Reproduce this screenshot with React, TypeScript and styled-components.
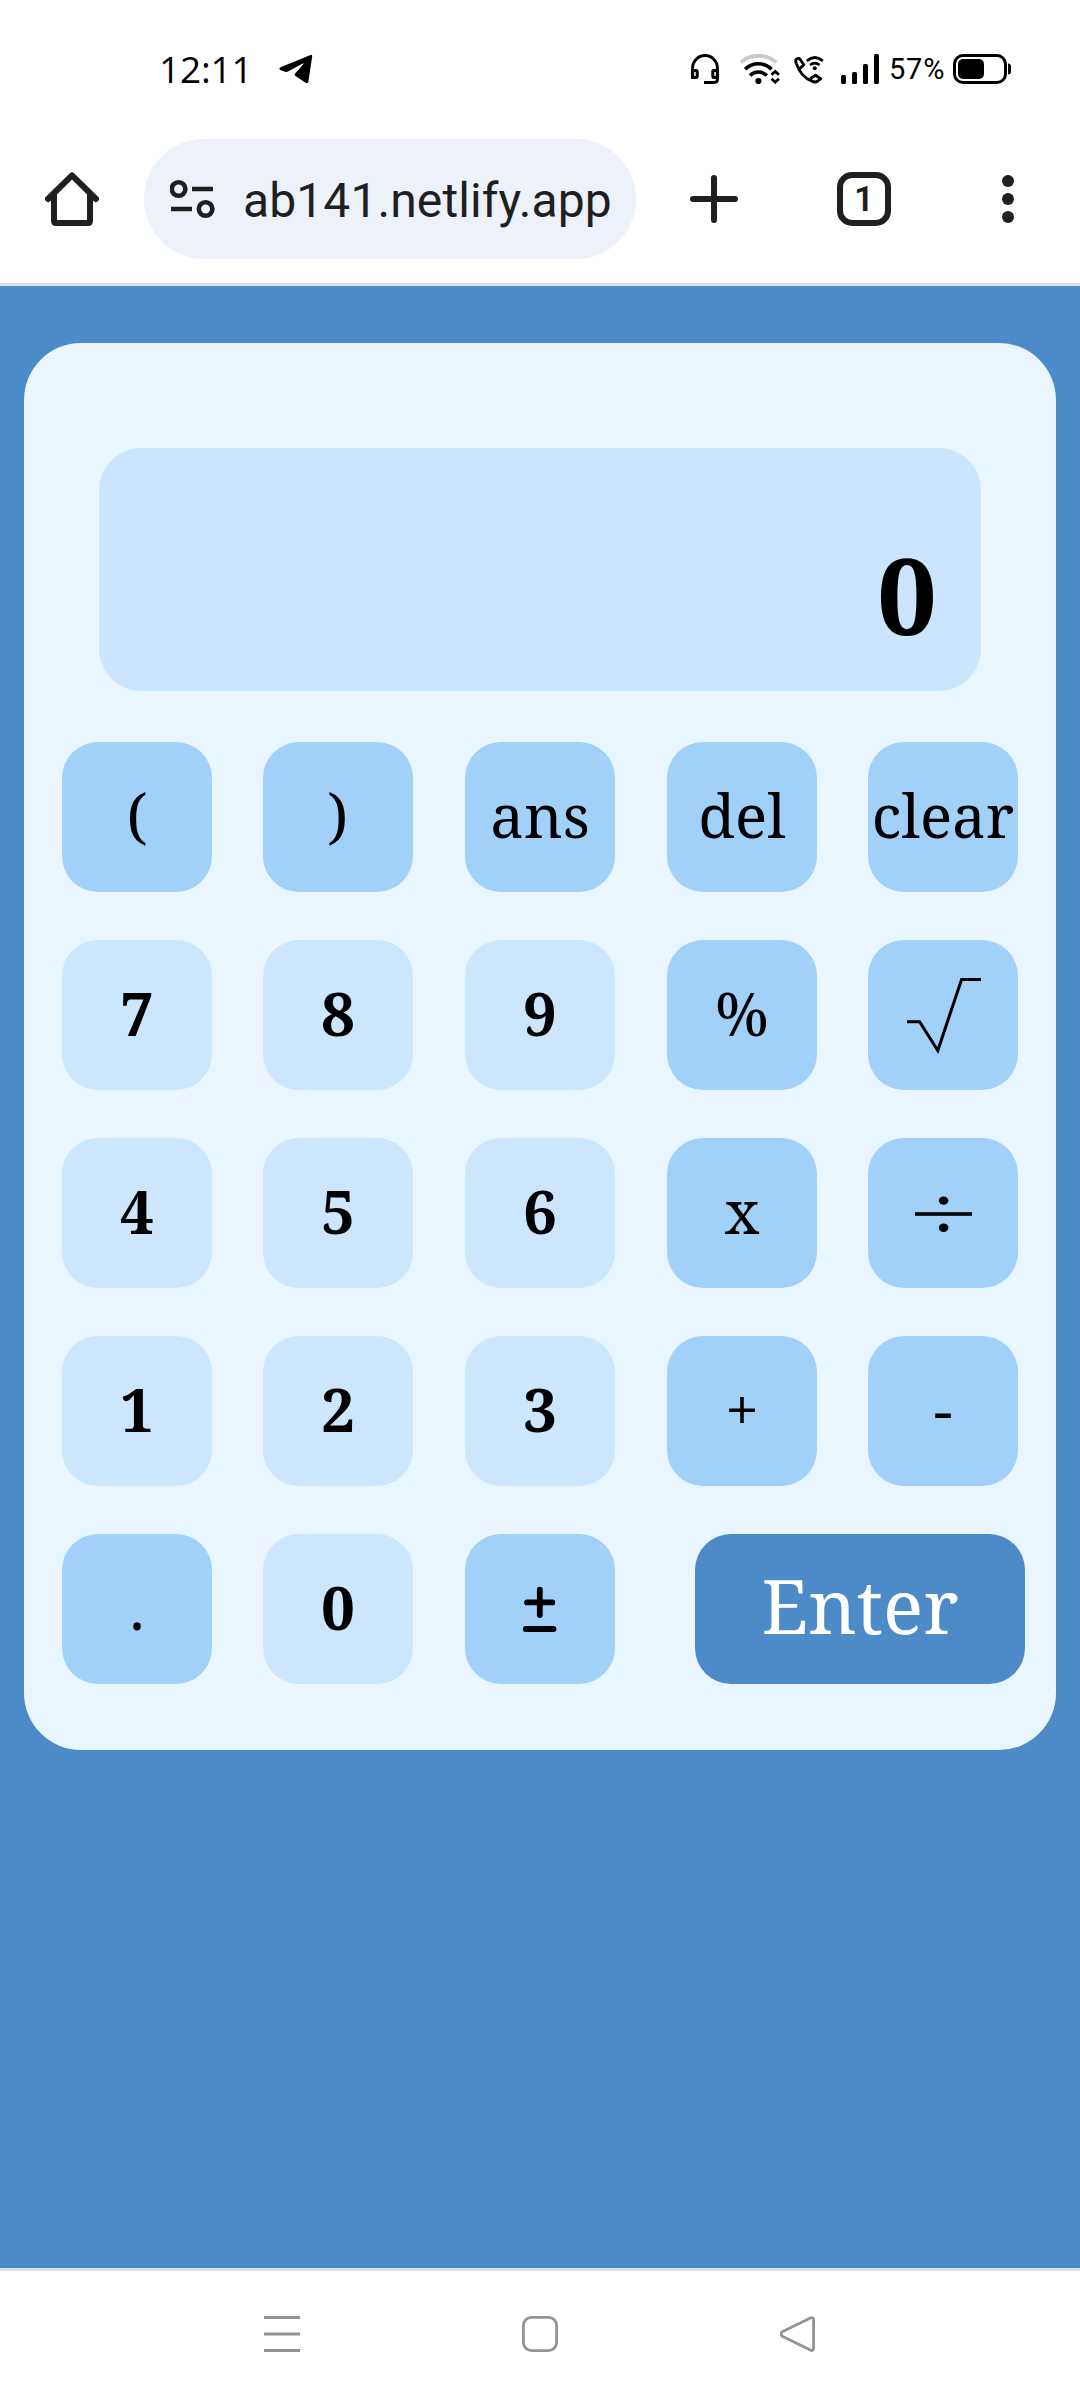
import React from "react";
import styled, { createGlobalStyle } from "styled-components";

const GlobalStyle = createGlobalStyle`
  *, *::before, *::after { box-sizing: border-box; }
  body { margin: 0; background: #fff; }
  svg { display: block; flex: none; }
`;

const serif = `"Noto Serif", "DejaVu Serif Condensed", "DejaVu Serif", serif`;

const Screen = styled.div`
  width: 1080px;
  height: 2400px;
  display: flex;
  flex-direction: column;
  overflow: hidden;
  background: #fff;
`;

const StatusBar = styled.header`
  height: 139px;
  padding: 44px 69px 0 159px;
  display: flex;
  justify-content: space-between;
  align-items: flex-start;
  color: #000;
`;

const StatusGroup = styled.div`
  height: 50px;
  display: flex;
  align-items: center;
`;

const Clock = styled.span`
  font: 400 37px/50px "Open Sans", "Noto Sans", sans-serif;
  letter-spacing: -0.2px;
  width: 120px;
  white-space: nowrap;
`;

const Percent = styled.span`
  font: 400 29px/50px Roboto, sans-serif;
  letter-spacing: 0.8px;
  width: 74px;
  padding-left: 10px;
  white-space: nowrap;
`;

const Gap = styled.span<{ $w: number }>`
  width: ${(p) => p.$w}px;
  flex: none;
`;

const Toolbar = styled.nav`
  height: 147px;
  display: flex;
  align-items: flex-start;
  border-bottom: 3px solid #dde3e3;
`;

const ToolButton = styled.button<{ $width: number }>`
  width: ${(p) => p.$width}px;
  height: 120px;
  padding: 0;
  border: 0;
  background: none;
  display: flex;
  align-items: center;
  justify-content: center;
  color: #1f1f1f;
`;

const AddressBar = styled.div`
  width: 492px;
  height: 120px;
  padding-left: 26px;
  border-radius: 60px;
  background: #ecf1fa;
  display: flex;
  align-items: center;
  gap: 27px;
  color: #1f1f1f;
`;

const Address = styled.span`
  padding-top: 3px;
  font: 400 48px/60px Roboto, sans-serif;
  letter-spacing: 0.1px;
  white-space: nowrap;
`;

const TabCount = styled.span`
  width: 54px;
  height: 54px;
  padding-top: 2px;
  border: 6px solid #1f1f1f;
  border-radius: 15px;
  display: flex;
  align-items: center;
  justify-content: center;
  font: 600 35px/40px Roboto, sans-serif;
`;

const Page = styled.main`
  height: 1982px;
  padding: 57px 24px 0;
  background: #4c8ac8;
`;

const Calculator = styled.section`
  height: 1407px;
  padding: 105px 38px 0;
  border-radius: 57px;
  background: #e9f5ff;
`;

const Display = styled.div`
  height: 243px;
  margin: 0 37px 51px;
  padding: 0 44px 35px 0;
  border-radius: 42px;
  background: #cbe5ff;
  display: flex;
  justify-content: flex-end;
  align-items: flex-end;
  font: 700 106px/124px ${serif};
  color: #000;
`;

const Keypad = styled.div`
  display: grid;
  grid-template-columns: 201px 202px 202px 201px 150px;
  grid-auto-rows: 150px;
  row-gap: 48px;
`;

type Kind = "digit" | "operator";

const Key = styled.button<{ $kind: Kind }>`
  width: 150px;
  padding: 0;
  border: 0;
  border-radius: 36px;
  background: ${(p) => (p.$kind === "digit" ? "#cce6fe" : "#a1d0f8")};
  color: #000;
  display: flex;
  align-items: center;
  justify-content: center;
  font: ${(p) => (p.$kind === "digit" ? 700 : 400)} 60px/80px ${serif};
  white-space: nowrap;
`;

const EnterKey = styled(Key)`
  grid-column: span 2;
  justify-self: end;
  width: 330px;
  margin-right: -7px;
  padding-bottom: 4px;
  background: #4c8ac8;
  color: #fff;
  font-size: 75px;
`;

const Label = styled.span`
  display: block;
  padding-bottom: 5px;
`;

const NavBar = styled.footer`
  height: 132px;
  padding: 0 264px 3px;
  border-top: 3px solid #dde3e8;
  display: flex;
  justify-content: space-between;
  align-items: center;
  color: #939393;
`;

const Telegram = () => (
  <svg width="34" height="32" viewBox="0 0 34 32" fill="currentColor">
    <path d="M1.5 14.2 31.5 2Q33.2 1.4 33.2 3.2L29.4 28.6Q28.8 31 26.6 29.7L16.5 23Q15 21.8 16.3 20.3L24.5 11Q24.8 10.2 23.8 10.4L9 18.6Q7.6 19.3 6 18.8L1.2 17Q-.5 15.4 1.5 14.2Z" />
  </svg>
);

const Headset = () => (
  <svg width="28" height="30" viewBox="0 0 28 30" fill="none" stroke="currentColor" strokeWidth="3">
    <path d="M1.6 23.5V14A12.4 12.4 0 0 1 26.4 14V25.5Q26.4 28.4 23.5 28.4H13" />
    <path d="M1.6 16.6H5Q6.2 16.6 6.2 17.8V22Q6.2 23.4 5 23.4H1.6ZM26.4 16.6H23Q21.8 16.6 21.8 17.8V22Q21.8 23.4 23 23.4H26.4Z" />
  </svg>
);

const Wifi = () => (
  <svg width="40" height="30" viewBox="0 0 40 30" fill="none" stroke="currentColor" strokeWidth="3.6">
    <path d="M1 8.4Q8 1.8 18.2 1.8T36.2 8.4" stroke="#cacaca" strokeWidth="3.8" />
    <path d="M5.2 15.2Q10.8 9.8 18.4 9.8T31.6 15.2" />
    <path d="M10 21.6Q13.6 18 18.4 18T26.8 21.6" />
    <circle cx="18.4" cy="27" r="3.1" fill="currentColor" stroke="none" />
    <path d="M31.5 20.8 35.2 17.4 38.9 20.8M31.5 24.8 35.2 28.2 38.9 24.8" strokeWidth="2.8" />
  </svg>
);

const WifiCall = () => (
  <svg width="30" height="30" viewBox="0 0 30 30" fill="none" stroke="currentColor" strokeWidth="2.9" strokeLinejoin="round">
    <path d="M2.4 9.6Q.6 5.4 3.4 4.6Q5 4 6 5.2L9.8 10.8L5 15.2" />
    <path d="M2.4 9.6Q6.6 22.6 18.4 27.4Q22.4 29.4 26.6 24.8L21.6 21.2L16.4 24.4" />
    <path d="M12.8 6.8Q20.8.4 28.8 6.8" />
    <path d="M16 11Q20.8 7.4 25.6 11" strokeWidth="2.6" />
    <circle cx="20.8" cy="14.3" r="2" fill="currentColor" stroke="none" />
  </svg>
);

const Signal = () => (
  <svg width="38" height="30" viewBox="0 0 38 30" fill="currentColor">
    <rect x="0" y="21" width="5" height="9" rx="1.6" />
    <rect x="11" y="18" width="5" height="12" rx="1.6" />
    <rect x="22" y="10" width="5" height="20" rx="1.6" />
    <rect x="33" y="0" width="5" height="30" rx="1.6" />
  </svg>
);

const Battery = () => (
  <svg width="58" height="30" viewBox="0 0 58 30" fill="currentColor">
    <rect x="1.5" y="1.5" width="51" height="27" rx="8.5" fill="none" stroke="currentColor" strokeWidth="3" />
    <rect x="5" y="5" width="26" height="20" rx="5" />
    <path d="M55 9.5Q58 10 58 12V18Q58 20 55 20.5Z" />
  </svg>
);

const Home = () => (
  <svg width="60" height="60" viewBox="0 0 60 60" fill="none" stroke="currentColor" strokeWidth="6" strokeLinecap="round" strokeLinejoin="round">
    <path d="M6 30 30 6.4 54 30" />
    <path d="M12 25V52Q12 54 14 54H46Q48 54 48 52V25" />
  </svg>
);

const SiteSettings = () => (
  <svg width="46" height="40" viewBox="0 0 46 40" fill="none" stroke="currentColor" strokeWidth="4.6">
    <circle cx="8.6" cy="10" r="6.8" />
    <path d="M22 10H43M1 30H22" />
    <circle cx="35.6" cy="30" r="6.8" />
  </svg>
);

const Plus = () => (
  <svg width="48" height="48" viewBox="0 0 48 48" fill="none" stroke="currentColor" strokeWidth="6" strokeLinecap="round">
    <path d="M24 3V45M3 24H45" />
  </svg>
);

const More = () => (
  <svg width="12" height="48" viewBox="0 0 12 48" fill="currentColor">
    <circle cx="6" cy="6" r="6" />
    <circle cx="6" cy="24" r="6" />
    <circle cx="6" cy="42" r="6" />
  </svg>
);

const Root = () => (
  <svg width="150" height="150" viewBox="0 0 150 150" fill="none" stroke="currentColor" strokeWidth="3">
    <path d="M39 81.8H51.6L69.8 110.5 93.6 39.4H113" />
  </svg>
);

const Divide = () => (
  <svg width="150" height="150" viewBox="0 0 150 150" fill="currentColor">
    <rect x="47" y="74.2" width="57" height="3.6" />
    <ellipse cx="75.6" cy="62.6" rx="4.8" ry="4.2" />
    <ellipse cx="75.6" cy="89.7" rx="4.8" ry="4.2" />
  </svg>
);

const PlusMinus = () => (
  <svg width="150" height="150" viewBox="0 0 150 150" fill="none" stroke="currentColor" strokeWidth="5.8" strokeLinecap="round">
    <path d="M62 68.4H87.3M74.8 55.6V81M60.8 95H88.5" />
  </svg>
);

const Recents = () => (
  <svg width="36" height="36" viewBox="0 0 36 36" fill="none" stroke="currentColor" strokeWidth="3">
    <path d="M0 1.6H36M0 18H36M0 34.4H36" />
  </svg>
);

const HomeSquare = () => (
  <svg width="36" height="36" viewBox="0 0 36 36" fill="none" stroke="currentColor" strokeWidth="2.8">
    <rect x="1.4" y="1.4" width="33.2" height="33.2" rx="8" />
  </svg>
);

const Back = () => (
  <svg width="36" height="36" viewBox="0 0 36 36" fill="none" stroke="currentColor" strokeWidth="2.8" strokeLinejoin="round">
    <path d="M2.2 15.8 30.4 1.9Q33.6 1 33.6 4V32Q33.6 35 30.4 34.1L2.2 20.2Q.2 18 2.2 15.8Z" />
  </svg>
);

type KeySpec = {
  id: string;
  kind: Kind;
  icon?: React.ReactNode;
};

const op = (id: string, icon?: React.ReactNode): KeySpec => ({ id, kind: "operator", icon });
const digit = (id: string): KeySpec => ({ id, kind: "digit" });

const keys: KeySpec[] = [
  op("("), op(")"), op("ans"), op("del"), op("clear"),
  digit("7"), digit("8"), digit("9"), op("%"), op("square root", <Root />),
  digit("4"), digit("5"), digit("6"), op("x"), op("divide", <Divide />),
  digit("1"), digit("2"), digit("3"), op("+"), op("-"),
  op("."), digit("0"), op("plus minus", <PlusMinus />),
];

export default function App() {
  return (
    <>
      <GlobalStyle />
      <Screen>
        <StatusBar>
          <StatusGroup>
            <Clock>12:11</Clock>
            <Telegram />
          </StatusGroup>
          <StatusGroup>
            <Headset />
            <Gap $w={21} />
            <Wifi />
            <Gap $w={14} />
            <WifiCall />
            <Gap $w={17} />
            <Signal />
            <Percent>57%</Percent>
            <Battery />
          </StatusGroup>
        </StatusBar>
        <Toolbar>
          <ToolButton $width={144} aria-label="Home"><Home /></ToolButton>
          <AddressBar>
            <SiteSettings />
            <Address>ab141.netlify.app</Address>
          </AddressBar>
          <ToolButton $width={156} aria-label="New tab"><Plus /></ToolButton>
          <ToolButton $width={144} aria-label="Tabs"><TabCount>1</TabCount></ToolButton>
          <ToolButton $width={144} aria-label="More"><More /></ToolButton>
        </Toolbar>
        <Page>
          <Calculator>
            <Display>0</Display>
            <Keypad>
              {keys.map((k) => (
                <Key key={k.id} $kind={k.kind} aria-label={k.id}>
                  {k.icon ?? <Label>{k.id}</Label>}
                </Key>
              ))}
              <EnterKey $kind="operator"><Label>Enter</Label></EnterKey>
            </Keypad>
          </Calculator>
        </Page>
        <NavBar>
          <Recents />
          <HomeSquare />
          <Back />
        </NavBar>
      </Screen>
    </>
  );
}
